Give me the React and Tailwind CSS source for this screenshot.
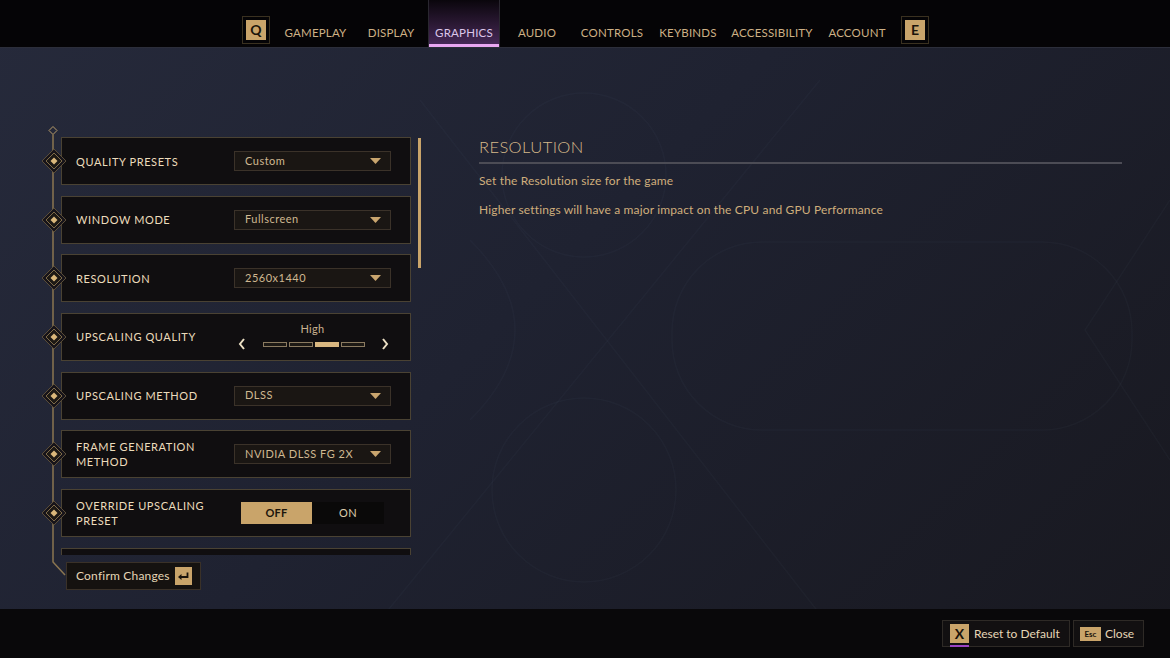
import React from "react";

const tabs = [
  { label: "GAMEPLAY", w: "w-[77px]" },
  { label: "DISPLAY", w: "w-[74px]" },
  { label: "GRAPHICS", w: "w-[72px]", active: true },
  { label: "AUDIO", w: "w-[74px]" },
  { label: "CONTROLS", w: "w-[76px]" },
  { label: "KEYBINDS", w: "w-[76px]" },
  { label: "ACCESSIBILITY", w: "w-[92px]" },
  { label: "ACCOUNT", w: "w-[78px]" },
];

function KeyBox({ k }) {
  return (
    <div className="w-[28px] h-[28px] border border-[#3a3120] p-[3px] flex">
      <div className="flex-1 bg-[#c9a46a] flex items-center justify-center text-[#1a130b] text-[14px] font-bold leading-none">
        {k}
      </div>
    </div>
  );
}

function Marker() {
  return (
    <svg width="26" height="26" viewBox="0 0 26 26" className="absolute left-[-1px] top-1/2 -translate-y-1/2">
      <polygon points="13,1 25,13 13,25 1,13" fill="#17141a" stroke="#5a4d38" strokeWidth="1" />
      <polygon points="13,5 21,13 13,21 5,13" fill="#1d1915" stroke="#7d6a48" strokeWidth="1" />
      <polygon points="13,9.5 16.5,13 13,16.5 9.5,13" fill="#dbb87b" />
    </svg>
  );
}

function Dropdown({ value }) {
  return (
    <div className="w-[157px] h-[20px] bg-[#1a1613] border border-[#3b3229] flex items-center pl-[10px] pr-[9px]">
      <span className="text-[11px] text-[#cfb891] tracking-[0.5px]">{value}</span>
      <svg width="11" height="6" viewBox="0 0 11 6" className="ml-auto">
        <polygon points="0,0 11,0 5.5,6" fill="#c9a56e" />
      </svg>
    </div>
  );
}

function Slider() {
  return (
    <div className="w-[157px] flex flex-col items-center">
      <span className="text-[11px] text-[#cbb290] leading-none mb-[4px] tracking-[0.3px]">High</span>
      <div className="w-full flex items-center">
        <svg width="8" height="12" viewBox="0 0 8 12" className="ml-[4px]">
          <polyline points="6,1 2,6 6,11" fill="none" stroke="#ece0c4" strokeWidth="2" />
        </svg>
        <div className="flex gap-[2px] ml-[17px]">
          {[0, 1, 2, 3].map((i) => (
            <div
              key={i}
              className={
                i === 2
                  ? "w-[24px] h-[5px] bg-[#d9b781] border border-[#d9b781]"
                  : "w-[24px] h-[5px] bg-[#1c1814] border border-[#8a7a60]"
              }
            />
          ))}
        </div>
        <svg width="8" height="12" viewBox="0 0 8 12" className="ml-[16px]">
          <polyline points="2,1 6,6 2,11" fill="none" stroke="#ece0c4" strokeWidth="2" />
        </svg>
      </div>
    </div>
  );
}

function Toggle() {
  return (
    <div className="w-[157px] flex justify-center">
      <div className="flex h-[22px]">
        <div className="w-[71px] bg-[#c9a46a] flex items-center justify-center text-[11px] font-bold text-[#1c150c] tracking-[0.3px]">
          OFF
        </div>
        <div className="w-[72px] bg-[#0a0909] flex items-center justify-center text-[11px] text-[#dccbac] tracking-[0.3px]">
          ON
        </div>
      </div>
    </div>
  );
}

const rows = [
  { label: "QUALITY PRESETS", type: "dd", value: "Custom" },
  { label: "WINDOW MODE", type: "dd", value: "Fullscreen" },
  { label: "RESOLUTION", type: "dd", value: "2560x1440" },
  { label: "UPSCALING QUALITY", type: "slider" },
  { label: "UPSCALING METHOD", type: "dd", value: "DLSS" },
  { label: "FRAME GENERATION METHOD", type: "dd", value: "NVIDIA DLSS FG 2X" },
  { label: "OVERRIDE UPSCALING PRESET", type: "toggle" },
  { label: "", type: "empty" },
];

function Row({ r }) {
  return (
    <div className="relative pl-[19px] shrink-0">
      <div className="h-[48px] bg-[#100e10] border border-[#4a4233] flex items-center pl-[14px]">
        {r.type !== "empty" && (
          <div className="w-[158px] pr-[18px] text-[11px] leading-[15px] text-[#ecdcbc] tracking-[0.6px]">
            {r.label}
          </div>
        )}
        {r.type === "dd" && <Dropdown value={r.value} />}
        {r.type === "slider" && <Slider />}
        {r.type === "toggle" && <Toggle />}
      </div>
      {r.type !== "empty" && <Marker />}
    </div>
  );
}

function Background() {
  return (
    <svg className="absolute inset-0 pointer-events-none" width="1170" height="658" viewBox="0 0 1170 658">
      <g fill="none" stroke="#9aa0bc" strokeOpacity="0.035" strokeWidth="1.5">
        <line x1="420" y1="100" x2="840" y2="640" />
        <line x1="820" y1="80" x2="380" y2="620" />
        <circle cx="584" cy="175" r="82" />
        <circle cx="584" cy="490" r="92" />
        <rect x="672" y="242" width="460" height="188" rx="90" />
        <path d="M470 240 Q 560 330 470 420" />
        <path d="M1170 200 L 1085 330 L 1170 460" />
      </g>
    </svg>
  );
}

export default function App() {
  return (
    <div
      className="w-[1170px] h-[658px] relative overflow-hidden flex flex-col bg-[linear-gradient(135deg,#262a3b_0%,#1f2231_45%,#18181f_100%)]"
      style={{ fontFamily: "Lato, 'Noto Sans', sans-serif" }}
    >
      <Background />
      {/* Top bar */}
      <header className="relative h-[48px] bg-[#050406] border-b border-[#2c2e3a] flex items-center pl-[242px] shrink-0">
        <div className="mt-[12px]">
          <KeyBox k="Q" />
        </div>
        <div className="flex h-full ml-[7px]">
          {tabs.map((t) =>
            t.active ? (
              <div
                key={t.label}
                className={`${t.w} h-full relative flex items-center justify-center pt-[18px] border-x border-[#2a2730] bg-[linear-gradient(180deg,#0a060c_0%,#2a1833_50%,#4a2b5c_100%)]`}
              >
                <span className="text-[11.5px] text-[#dcc6ea] tracking-[0.2px]">{t.label}</span>
                <div className="absolute left-0 right-0 bottom-0 h-[3px] bg-[#e9a7f2]" />
              </div>
            ) : (
              <div key={t.label} className={`${t.w} h-full flex items-center justify-center pt-[18px]`}>
                <span className="text-[11.5px] text-[#cdb085] tracking-[0.2px]">{t.label}</span>
              </div>
            )
          )}
        </div>
        <div className="mt-[12px] ml-[5px]">
          <KeyBox k="E" />
        </div>
      </header>

      {/* Main */}
      <main className="relative flex-1 flex items-start">
        {/* Left column */}
        <div className="relative ml-[42px] mt-[78px] w-[379px]">
          <svg className="absolute left-0 top-0" width="30" height="460" viewBox="0 0 30 460">
            <polygon points="11,0.5 15,4.5 11,8.5 7,4.5" fill="none" stroke="#b89c6a" strokeWidth="1" />
            <polyline points="11,8.5 11,436 23,449" fill="none" stroke="#8a7550" strokeWidth="1.5" />
          </svg>
          <div className="flex mt-[11px]">
            <div className="w-[369px] h-[418px] overflow-hidden flex flex-col gap-[10.67px]">
              {rows.map((r, i) => (
                <Row key={i} r={r} />
              ))}
            </div>
            <div className="ml-[7px] mt-[1px] w-[3px] h-[130px] bg-[#c9a46a]" />
          </div>
          <div className="ml-[24px] mt-[7px] w-[135px] h-[28px] bg-[#151210] border border-[#3a3128] flex items-center pl-[9px]">
            <span className="text-[12px] text-[#e6d6b6] tracking-[0.2px]">Confirm Changes</span>
            <div className="ml-auto mr-[8px] w-[17px] h-[18px] bg-[#c9a46a] flex items-center justify-center">
              <svg width="11" height="9" viewBox="0 0 11 9">
                <path d="M9.5 0.5 V5 H2" fill="none" stroke="#1a130b" strokeWidth="1.8" />
                <polygon points="0,5 3.5,2 3.5,8" fill="#1a130b" />
              </svg>
            </div>
          </div>
        </div>

        {/* Right panel */}
        <div className="ml-[58px] mt-[89px] w-[643px]">
          <h2 className="text-[16.5px] font-light text-[#d6b98a] tracking-[0.4px] leading-[20px]">RESOLUTION</h2>
          <div className="mt-[5px] h-[2px] bg-[#4c4c55]" />
          <p className="mt-[10px] text-[12px] text-[#cfae7c] leading-[14px] tracking-[0.15px]">
            Set the Resolution size for the game
          </p>
          <p className="mt-[15px] text-[12px] text-[#cfae7c] leading-[14px] tracking-[0.15px]">
            Higher settings will have a major impact on the CPU and GPU Performance
          </p>
        </div>
      </main>

      {/* Footer */}
      <footer className="relative h-[49px] bg-[#09080a] shrink-0 flex items-center justify-end pr-[26px] gap-[3px]">
        <div className="w-[128px] h-[27px] bg-[#121011] border border-[#2e2a26] flex items-center pl-[7px]">
          <div className="relative w-[19px] h-[19px] bg-[#c9a46a] flex items-center justify-center">
            <span className="text-[14px] font-bold text-[#1a130b] leading-none">X</span>
            <div className="absolute left-0 right-0 bottom-[-4px] h-[2px] bg-[#9b43c4]" />
          </div>
          <span className="ml-[5px] text-[12px] text-[#e6d6b6]">Reset to Default</span>
        </div>
        <div className="w-[71px] h-[27px] bg-[#121011] border border-[#2e2a26] flex items-center pl-[6px]">
          <div className="w-[21px] h-[14px] bg-[#c9a46a] flex items-center justify-center">
            <span className="text-[8px] font-bold text-[#1a130b] leading-none">Esc</span>
          </div>
          <span className="ml-[4px] text-[12px] text-[#e6d6b6]">Close</span>
        </div>
      </footer>
    </div>
  );
}
